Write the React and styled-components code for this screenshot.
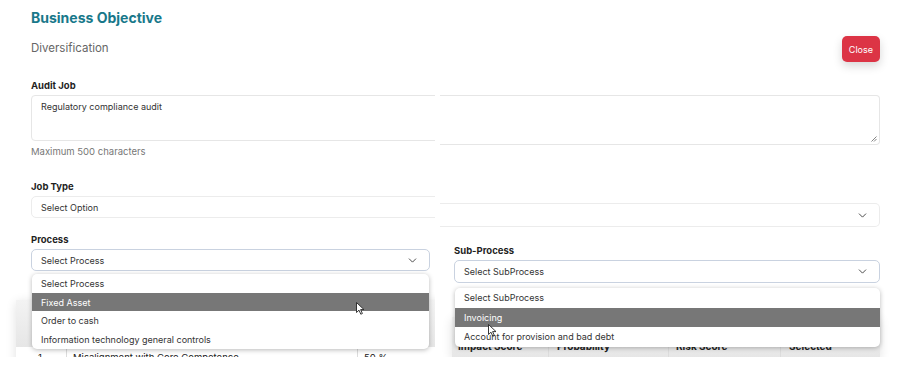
import React from 'react';
import styled, { createGlobalStyle } from 'styled-components';
import { ChevronDown } from 'lucide-react';

const GlobalStyle = createGlobalStyle`
  html, body {
    margin: 0;
    padding: 0;
    background: #ffffff;
  }
  body {
    font-family: Inter, "Open Sans", sans-serif;
    color: #333;
  }
  * {
    box-sizing: border-box;
  }
`;

const Page = styled.div`
  display: flex;
  gap: 5px;
  width: 916px;
  height: 375px;
  background: #fff;
`;

const Shot = styled.div`
  position: relative;
  width: ${(props) => props.width}px;
  height: 357px;
  overflow: hidden;
  flex-shrink: 0;
`;

const LeftShot = styled(Shot)`
  padding-left: 16px;
`;

const RightShot = styled(Shot)`
  padding-right: 36px;
`;

const Form = styled.div`
  width: 849px;
  padding-left: 15px;
  padding-top: 8px;
`;

const Title = styled.h2`
  margin: 0;
  font-size: 14px;
  line-height: 20px;
  font-weight: 700;
  color: #18788a;
`;

const Subtitle = styled.div`
  margin-top: 12px;
  font-size: 11.5px;
  line-height: 16px;
  color: #666;
`;

const Label = styled.div`
  margin-top: ${(props) => props.gap || 0}px;
  padding-left: ${(props) => props.indent || 0}px;
  font-size: 9.5px;
  line-height: 14px;
  font-weight: 700;
  color: #1f1f1f;
`;

const TextBox = styled.div`
  position: relative;
  margin-top: ${(props) => props.gap || 0}px;
  height: ${(props) => props.h}px;
  border: 1px solid #e6e6e6;
  border-radius: 4px;
  padding: 5px 9px;
  font-size: 9px;
  line-height: 12px;
  color: #333;
  background: #fff;
  ${(props) => props.cut && `
    border-left: none;
    border-radius: 0 4px 4px 0;
  `}
`;

const Hint = styled.div`
  margin-top: 4px;
  font-size: 9.5px;
  line-height: 14px;
  color: #777;
`;

const Select = styled.div`
  position: relative;
  display: flex;
  align-items: center;
  justify-content: space-between;
  margin-top: ${(props) => props.gap || 0}px;
  height: ${(props) => props.h || 22}px;
  padding: 0 10px 0 9px;
  border: 1px solid ${(props) => (props.active ? '#c9d2e0' : '#ececec')};
  border-radius: 5px;
  font-size: 9px;
  color: #333;
  background: #fff;
  ${(props) => props.cut && `
    border-left: none;
    border-radius: 0 5px 5px 0;
  `}
`;

const Columns = styled.div`
  display: grid;
  grid-template-columns: 399px 426px;
  column-gap: 24px;
`;

const Field = styled.div`
  position: relative;
  padding-left: ${(props) => props.indent || 0}px;
`;

const Menu = styled.div`
  position: absolute;
  z-index: 5;
  left: ${(props) => props.left}px;
  right: ${(props) => props.right}px;
  top: calc(100% + ${(props) => props.offset}px);
  background: #fff;
  border-radius: 5px;
  box-shadow: 0 1px 5px rgba(0, 0, 0, 0.28);
`;

const Option = styled.div`
  position: relative;
  height: ${(props) => props.h}px;
  display: flex;
  align-items: center;
  padding-left: 9px;
  font-size: 9px;
  color: ${(props) => (props.selected ? '#fff' : '#333')};
  background: ${(props) => (props.selected ? '#777777' : 'transparent')};
  &:first-child {
    border-radius: 5px 5px 0 0;
  }
  &:last-child {
    border-radius: 0 0 5px 5px;
  }
`;

const Cursor = styled.svg`
  position: absolute;
  left: ${(props) => props.x}px;
  top: ${(props) => props.y}px;
  width: 9px;
  height: 13px;
  overflow: visible;
`;

const Table = styled.div`
  margin-top: ${(props) => props.gap}px;
  margin-left: ${(props) => props.indent || 0}px;
  width: ${(props) => props.w}px;
  background: #fff;
  box-shadow: 0 2px 10px rgba(0, 0, 0, 0.12);
`;

const HeadRow = styled.div`
  display: grid;
  grid-template-columns: ${(props) => props.cols};
  height: ${(props) => props.h}px;
  background: linear-gradient(#f3f3f3, #e6e6e6);
`;

const BodyRow = styled.div`
  display: grid;
  grid-template-columns: ${(props) => props.cols};
  height: 30px;
  background: #fff;
`;

const Cell = styled.div`
  padding: ${(props) => props.pad || '0 6px'};
  border-left: ${(props) => (props.first ? 'none' : '1px solid #dcdcdc')};
  font-size: ${(props) => (props.head ? '10px' : '9.5px')};
  font-weight: ${(props) => (props.head ? 700 : 400)};
  color: #222;
  display: flex;
  align-items: ${(props) => (props.head ? 'flex-end' : 'flex-start')};
  white-space: nowrap;
`;

const TopBar = styled.div`
  display: flex;
  justify-content: flex-end;
  padding-top: 36px;
`;

const CloseButton = styled.button`
  height: 26px;
  padding: 0 7px;
  border: none;
  border-radius: 5px;
  background: #dc3445;
  color: #fff;
  font-family: inherit;
  font-size: 9px;
  box-shadow: 0 4px 10px rgba(0, 0, 0, 0.16);
`;

const Grip = styled.svg`
  position: absolute;
  right: 2px;
  bottom: 2px;
  width: 6px;
  height: 6px;
`;

const Arrow = () => (
  <ChevronDown size={13} strokeWidth={1.6} color="#333" />
);

const Pointer = ({ x, y }) => (
  <Cursor x={x} y={y} viewBox="0 0 9 13">
    <path
      d="M0.5 0.5 L0.5 10.5 L3 8.2 L4.8 12.2 L6.4 11.5 L4.6 7.6 L8 7.6 Z"
      fill="#fff"
      stroke="#222"
      strokeWidth="0.9"
      strokeLinejoin="round"
    />
  </Cursor>
);

const processes = [
  'Select Process',
  'Fixed Asset',
  'Order to cash',
  'Information technology general controls',
];

const subProcesses = [
  'Select SubProcess',
  'Invoicing',
  'Account for provision and bad debt',
];

const App = () => (
  <>
    <GlobalStyle />
    <Page>
      <LeftShot width={435}>
        <Form>
          <Title>Business Objective</Title>
          <Subtitle>Diversification</Subtitle>
          <Label gap={23}>Audit Job</Label>
          <TextBox gap={2} h={46}>Regulatory compliance audit</TextBox>
          <Hint>Maximum 500 characters</Hint>
          <Label gap={21}>Job Type</Label>
          <Select gap={2}>Select Option</Select>
          <Columns>
            <Field>
              <Label gap={15}>Process</Label>
              <Select gap={2} active>
                Select Process
                <Arrow />
              </Select>
              <Menu left={1} right={1} offset={3}>
                {processes.map((p, i) => (
                  <Option key={p} h={i === 3 ? 19 : 18.7} selected={i === 1}>
                    {p}
                    {i === 1 && <Pointer x={324} y={9} />}
                  </Option>
                ))}
              </Menu>
            </Field>
          </Columns>
        </Form>
        <Table gap={29} w={460}>
          <HeadRow h={47} cols="50px 291px 1fr">
            <Cell first head />
            <Cell head />
            <Cell head />
          </HeadRow>
          <BodyRow cols="50px 291px 1fr">
            <Cell first pad="5px 22px">1</Cell>
            <Cell pad="5px 6px">Misalignment with Core Competence</Cell>
            <Cell pad="5px 6px">50 %</Cell>
          </BodyRow>
        </Table>
      </LeftShot>

      <RightShot width={476}>
        <TopBar>
          <CloseButton>Close</CloseButton>
        </TopBar>
        <TextBox gap={33} h={50} cut>
          <Grip viewBox="0 0 6 6">
            <path d="M0.5 5.5 L5.5 0.5 M3 5.5 L5.5 3" stroke="#666" strokeWidth="0.8" />
          </Grip>
        </TextBox>
        <Select gap={58} h={24} cut>
          <span />
          <Arrow />
        </Select>
        <Field indent={14}>
          <Label gap={17}>Sub-Process</Label>
          <Select gap={2} h={23} active>
            Select SubProcess
            <Arrow />
          </Select>
          <Menu left={15} right={0} offset={5}>
            {subProcesses.map((p, i) => (
              <Option key={p} h={19.5} selected={i === 1}>
                {p}
                {i === 1 && <Pointer x={33} y={16} />}
              </Option>
            ))}
          </Menu>
        </Field>
        <Table gap={34} indent={12} w={428}>
          <HeadRow h={41} cols="96px 120px 112px 1fr">
            <Cell first head pad="0 6px 6px">Impact Score</Cell>
            <Cell head pad="0 8px 6px">Probability</Cell>
            <Cell head pad="0 7px 6px">Risk Score</Cell>
            <Cell head pad="0 8px 6px">Selected</Cell>
          </HeadRow>
        </Table>
      </RightShot>
    </Page>
  </>
);

export default App;
